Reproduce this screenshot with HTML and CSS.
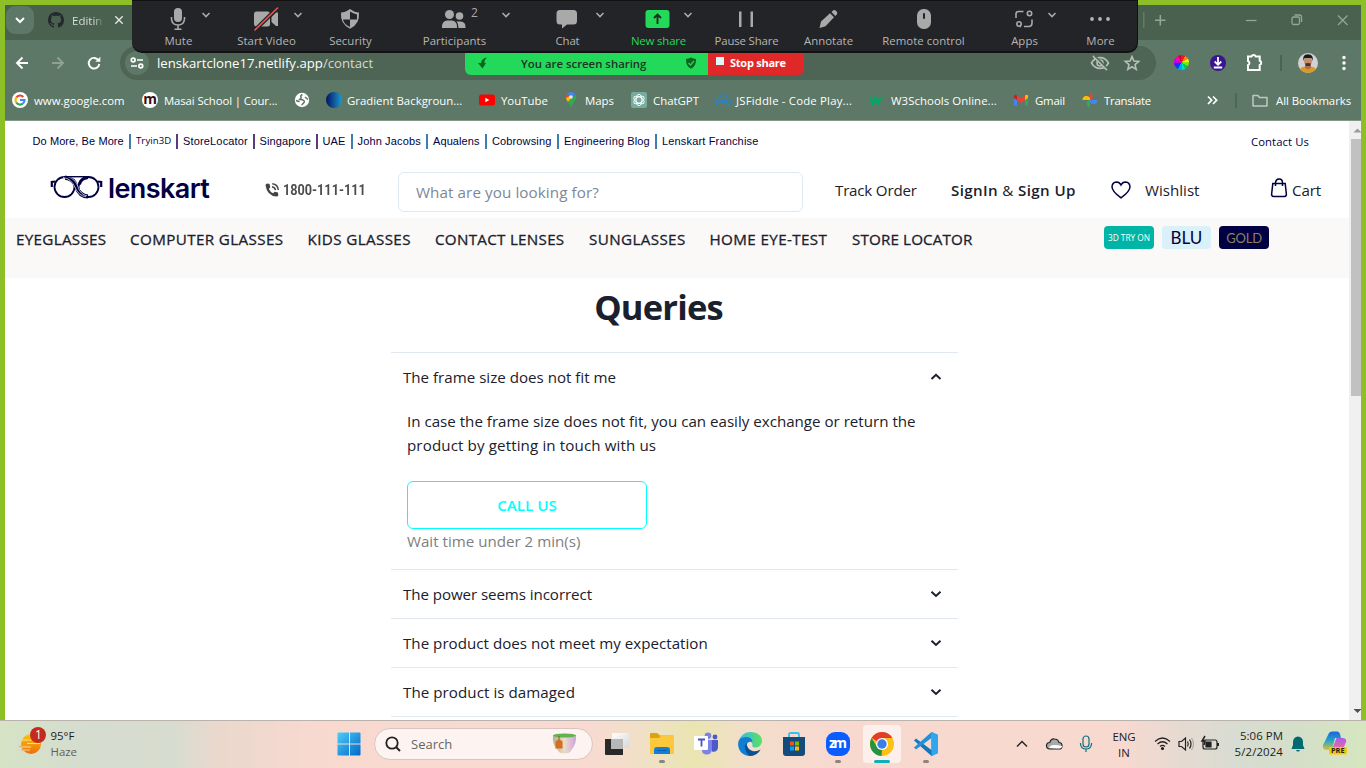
FILE: index.html
```html
<!DOCTYPE html>
<html lang="en">
<head>
<meta charset="utf-8">
<title>Lenskart - Contact</title>
<link rel="stylesheet" href="styles.css">
</head>
<body>
<div class="desktop">
  <div class="browser">
    <div class="tabstrip">
      <div class="tab-search"><svg width="12" height="12" viewBox="0 0 12 12"><path d="M2 4l4 4 4-4" fill="none" stroke="#fff" stroke-width="2"/></svg></div>
      <svg class="tab-icon" width="16" height="16" viewBox="0 0 16 16"><path fill="#24292e" d="M8 0C3.58 0 0 3.58 0 8c0 3.54 2.29 6.53 5.47 7.59.4.07.55-.17.55-.38 0-.19-.01-.82-.01-1.49-2.01.37-2.53-.49-2.69-.94-.09-.23-.48-.94-.82-1.13-.28-.15-.68-.52-.01-.53.63-.01 1.08.58 1.23.82.72 1.21 1.87.87 2.33.66.07-.52.28-.87.51-1.07-1.78-.2-3.64-.89-3.64-3.95 0-.87.31-1.59.82-2.15-.08-.2-.36-1.02.08-2.12 0 0 .67-.21 2.2.82.64-.18 1.32-.27 2-.27s1.36.09 2 .27c1.53-1.04 2.2-.82 2.2-.82.44 1.1.16 1.92.08 2.12.51.56.82 1.27.82 2.15 0 3.07-1.87 3.75-3.65 3.95.29.25.54.73.54 1.48 0 1.07-.01 1.93-.01 2.2 0 .21.15.46.55.38A8.01 8.01 0 0 0 16 8c0-4.42-3.58-8-8-8z"/></svg>
      <span class="tab-title">Editin</span>
      <svg width="10" height="10" viewBox="0 0 10 10"><path d="M1.3 1.3l7.4 7.4M8.7 1.3L1.3 8.7" stroke="#dfe5e0" stroke-width="1.4"/></svg>
      <div class="window-buttons">
        <svg width="219" height="20" viewBox="0 0 219 20" fill="none" stroke="#96a598" stroke-width="1.3">
          <path d="M1.8 2v16" stroke="#6b7f6e"/><path d="M13 10.300h10.500M18.300 5v10.500" stroke-width="1.500"/>
          <path d="M104 10.500h10.500"/><rect x="150" y="7" width="7.500" height="7.500" rx="1.500"/><path d="M152.500 5h5q2 0 2 2v5"/>
          <path d="M196 5.500l9.500 9.500M205.500 5.500L196 15"/>
        </svg>
      </div>
    </div>
    <div class="toolbar">
      <svg class="nav-icons" width="100" height="24" viewBox="0 0 100 24" fill="none" stroke="#fff" stroke-width="1.900">
        <path d="M23 12H12.500M17.500 6.500L12 12l5.500 5.500"/>
        <path d="M47 12h10.500M52.500 6.500L58 12l-5.500 5.500" stroke="#90a193"/>
        <path d="M93.600 9.500A5.300 5.300 0 1 0 94.300 13"/><path d="M95.300 5.800v5h-5z" fill="#fff" stroke="none"/>
      </svg>
      <div class="omnibox">
        <div class="site-info"><svg width="14" height="12" viewBox="0 0 14 12" fill="none" stroke="#fff" stroke-width="1.700"><circle cx="3.200" cy="3" r="1.900"/><path d="M7 3h6M1 9h6"/><circle cx="10.800" cy="9" r="1.900"/></svg></div>
        <span class="url">lenskartclone17.netlify.app<i>/contact</i></span>
        <svg class="omni-icons" width="50" height="20" viewBox="0 0 50 20" fill="none" stroke="#b5c0b6" stroke-width="1.600">
          <path d="M1.500 10Q4.500 4.600 10 4.600T18.500 10Q15.500 15.400 10 15.400T1.500 10z"/><circle cx="10" cy="10" r="3"/><path d="M3 3l14 14" stroke-width="1.800"/><path d="M4.500 2.500l13 13" stroke="#4e6454" stroke-width="1.400"/>
          <path d="M42 3.600l1.900 4.500 4.800.4-3.700 3.100 1.200 4.800-4.200-2.600-4.200 2.600 1.200-4.800-3.700-3.100 4.800-.4z"/>
        </svg>
      </div>
      <div class="wheel"></div>
      <svg class="ext" width="155" height="24" viewBox="0 0 155 24">
        <circle cx="18" cy="12" r="8" fill="#3a1591"/><path d="M18 6v7M14.700 10.500l3.300 3.300 3.300-3.300M13.800 16.500h8.400" stroke="#fff" stroke-width="1.800" fill="none"/>
        <path d="M48 5.500h3.500a2.200 2.200 0 0 1 4.200 0h4v4.200a2.200 2.200 0 0 1 0 4.200v5H48v-4.800a2.100 2.100 0 0 0 0-4z" fill="none" stroke="#fff" stroke-width="2"/>
        <path d="M81 4v16" stroke="#465e4c" stroke-width="1.500"/>
        <clipPath id="av"><circle cx="108" cy="12" r="10"/></clipPath>
        <g clip-path="url(#av)"><path fill="#d4d1d4" d="M98 2h20v20H98z"/><path d="M99 22q0-6 6-6.500h6q6 .5 6 6.500z" fill="#dc9a25"/><path d="M105 12h6v5l-3 1.500-3-1.500z" fill="#a9704e"/><ellipse cx="108" cy="10" rx="4" ry="5" fill="#c48f71"/><path d="M103.500 10Q102 3 108 3.200T112.500 10l-1-3h-7z" fill="#191b22"/><path d="M105 12.500q3-1 6 0l-1 2.500h-4z" fill="#453233"/></g>
        <g fill="#fff"><circle cx="144" cy="6.500" r="1.700"/><circle cx="144" cy="12" r="1.700"/><circle cx="144" cy="17.500" r="1.700"/></g>
      </svg>
    </div>
    <div class="bookmarks">
      <div class="bm w130"><svg viewBox="0 0 16 16"><circle cx="8" cy="8" r="8" fill="#fff"/><g fill="none" stroke-width="2.200"><path d="M4.300 5.500A4.500 4.500 0 0 1 11.300 4.900" stroke="#ea4335"/><path d="M4.300 5.500a4.500 4.500 0 0 0 0 5" stroke="#fbbc05"/><path d="M4.300 10.500a4.500 4.500 0 0 0 6.700 1" stroke="#34a853"/><path d="M8 8h4.500q0 2.200-1.500 3.500" stroke="#4285f4"/></g></svg><span>www.google.com</span></div>
      <div class="bm w152 tight1"><b class="masai">m</b><span>Masai School | Cour...</span></div>
      <div class="bm w32"><svg viewBox="0 0 16 16"><circle cx="8" cy="8" r="7.200" fill="#fff"/><path d="M8.500 2.500Q6 3.500 7 5T4.800 7.600Q8 7 9.800 8.500T7.500 13M2 8.500l3.500 1.300M11 5l3 2.500" fill="none" stroke="#5c7665" stroke-width="1.500"/></svg></div>
      <div class="bm w153 long"><b class="grad"></b><span>Gradient Backgroun...</span></div>
      <div class="bm w84"><svg viewBox="0 0 16 16"><rect y="2.500" width="16" height="11" rx="2.500" fill="#f00"/><path d="M6.300 5.700v4.600l4-2.300z" fill="#fff"/></svg><span>YouTube</span></div>
      <div class="bm w68"><svg viewBox="0 0 16 16"><path d="M8 0a5 5 0 0 0-4 2l4 4 4.200-3.600A5 5 0 0 0 8 0z" fill="#4285f4"/><path d="M4 2Q2.600 4 3 6l2 .7L7 4z" fill="#ea4335"/><path d="M3 6q.3 2 2 4l4.500-5L7 4z" fill="#fbbc04"/><path d="M5 10q2 2.500 3 6 1-3.500 3-6 2.500-3 2-5.500L12.200 2.400z" fill="#34a853"/><circle cx="8" cy="5" r="1.800" fill="#d9e7fb"/></svg><span>Maps</span></div>
      <div class="bm w84"><svg viewBox="0 0 16 16"><rect width="16" height="16" rx="2" fill="#75ac9d"/><g fill="none" stroke="#fff" stroke-width="1"><ellipse cx="8" cy="8" rx="3" ry="5.700"/><ellipse cx="8" cy="8" rx="3" ry="5.700" transform="rotate(60 8 8)"/><ellipse cx="8" cy="8" rx="3" ry="5.700" transform="rotate(120 8 8)"/></g></svg><span>ChatGPT</span></div>
      <div class="bm w154 long jsf"><svg viewBox="0 0 16 16"><path d="M3.500 13.500Q.5 13 .7 10.200.9 8.200 2.700 7.700 2.500 5 5 5 6.500 2.500 9.300 2.800 12.600 3.500 13 7q2.300.8 2.300 3.200 0 2.800-3 3.300zM8 9.500Q6.500 7.600 5.200 7.800T4 9.600t1.300 1.800T8 9.500q1.500-1.900 2.800-1.700T12 9.600t-1.300 1.800T8 9.500z" fill="none" stroke="#2485d6" stroke-width="1.200"/></svg><span>JSFiddle - Code Play...</span></div>
      <div class="bm w144 long w3"><svg viewBox="0 0 16 16"><path d="M1 5l2.500 6.500L6.500 6 9 11.500 12 5" fill="none" stroke="#06a566" stroke-width="2.800"/><path d="M13.500 4h1.500l-1 1.600 1 1.600" fill="none" stroke="#06a566" stroke-width=".8"/></svg><span>W3Schools Online...</span></div>
      <div class="bm w69 gm"><svg viewBox="0 0 16 16"><path d="M1 3h3v10.500H2q-1 0-1-1z" fill="#4285f4"/><path d="M12 3h3v9.500q0 1-1 1h-2z" fill="#34a853"/><path d="M1 3.500Q2 2 4 3.500l4 3 4-3Q14 2 15 3.500v2.600l-7 5-7-5z" fill="#ea4335"/><path d="M12 3.500Q14 2 15 3.500v2.600l-3 2z" fill="#fbbc04"/><path d="M1 3.500Q2 2 4 3.500v4.600l-3-2z" fill="#c5221f"/></svg><span>Gmail</span></div>
      <div class="bm w125 tr"><svg viewBox="0 0 16 16"><path d="M8 8V.5a4 4 0 0 1 0 7.500z" fill="#ea4335"/><path d="M8 8H.5A4 4 0 0 1 8 6z" fill="#fbbc04"/><path d="M8 8v7.500A4 4 0 0 1 6 8.300z" fill="#34a853"/><path d="M8 8h7.500a4 4 0 0 1-7.500 2z" fill="#4285f4"/></svg><span>Translate</span></div>
      <svg class="bm-end" width="62" height="20" viewBox="0 0 62 20" fill="none"><path d="M1 6.500l3.700 3.700L1 14M6 6.500l3.700 3.700L6 14" stroke="#fff" stroke-width="1.700"/><path d="M29 3v15" stroke="#4a6150" stroke-width="1.500"/><path d="M46 5.500h5l1.500 2h7.500v8.500H46z" stroke="#bfc8c0" stroke-width="1.500" stroke-linejoin="round"/></svg>
      <span class="all">All Bookmarks</span>
    </div>
    <div class="viewport">
      <main class="page">
        <div class="topline">
          <a class="l1">Do More, Be More</a><a class="l2">Tryin3D</a><a class="l3">StoreLocator</a><a class="l4">Singapore</a><a class="l5">UAE</a><a class="l6">John Jacobs</a><a class="l7">Aqualens</a><a class="l8">Cobrowsing</a><a class="l9">Engineering Blog</a><a class="l10">Lenskart Franchise</a>
          <a class="contact">Contact Us</a>
        </div>
        <header class="header">
          <svg class="glasses" width="53" height="24" viewBox="0 0 53 24" fill="none" stroke="#000042"><ellipse cx="14.500" cy="12" rx="10" ry="10" stroke-width="1.800"/><ellipse cx="38.500" cy="12" rx="10" ry="10" stroke-width="1.800"/><path d="M15 2.600q8.500.5 11.500 9.400t11.500 9.500" stroke-width="4.200"/><path d="M13 2.300q8.500 1.500 12 10t11 9.500M18 1.800q7.500 2 10 10t9 9" stroke="#fff" stroke-width=".7"/><path d="M29.500 9.500q1-6 8.500-7" stroke-width="3"/><path d="M14 1.700h24" stroke-width="1.400"/><path d="M5.500 6.500L1.800 7v5M47.500 6.500l3.700.5v5" stroke-width="2.200"/></svg>
          <span class="brand">lenskart</span>
          <svg class="phone" width="16" height="16" viewBox="0 0 16 16"><path d="M3.300 1.500L5.500 2l.8 3.300L4.800 7q1.500 3 4.300 4.300l1.600-1.500 3.300.8.300 3q-.5 1-1.800.9Q3 14 1.500 3.300q.3-1.500 1.800-1.800z" fill="#444"/><path d="M8 4.700q3 .3 3.500 3.500M8.300 1.700q5.500.5 6 6.300" fill="none" stroke="#444" stroke-width="1.500"/></svg>
          <b class="tel">1800-111-111</b>
          <div class="search">What are you looking for?</div>
          <span class="track">Track Order</span>
          <span class="sign"><b>SignIn</b> &amp; <b>Sign Up</b></span>
          <svg class="heart" width="20" height="18" viewBox="0 0 20 18"><path d="M10 16.800Q1 10.500 1 5.800 1.300 1.300 5.500 1 8.500 1 10 4q1.500-3 4.500-3 4.200.3 4.500 4.800 0 4.700-9 11z" fill="none" stroke="#000042" stroke-width="1.500"/></svg>
          <span class="wish">Wishlist</span>
          <svg class="bag" width="18" height="20" viewBox="0 0 18 20" fill="none" stroke="#000042" stroke-width="1.500"><path d="M2.800 5.500h12.400l1.200 10.800q.1 2-1.900 2.200H3.500q-2-.2-1.900-2.200zM5.500 8V4.500Q5.800 1.200 9 1t3.500 3.500V8"/></svg>
          <span class="cart">Cart</span>
        </header>
        <nav class="nav">
          <a class="n1">EYEGLASSES</a><a class="n2">COMPUTER GLASSES</a><a class="n3">KIDS GLASSES</a><a class="n4">CONTACT LENSES</a><a class="n5">SUNGLASSES</a><a class="n6">HOME EYE-TEST</a><a class="n7">STORE LOCATOR</a>
          <div class="pill try">3D TRY ON</div><div class="pill blu">BLU</div><div class="pill gold">GOLD</div>
        </nav>
        <h1>Queries</h1>
        <section class="accordion">
          <div class="row"><span>The frame size does not fit me</span><svg width="12" height="8" viewBox="0 0 12 8"><path d="M1.500 6L6 1.800 10.500 6" /></svg></div>
          <div class="panel">
            <p>In case the frame size does not fit, you can easily exchange or return the<br><span class="line2">product by getting in touch with us</span></p>
            <button>CALL US</button>
            <p class="wait">Wait time under 2 min(s)</p>
          </div>
          <div class="row"><span class="pw">The power seems incorrect</span><svg width="12" height="8" viewBox="0 0 12 8"><path d="M1.500 1.800L6 6l4.500-4.200"/></svg></div>
          <div class="row"><span class="ex">The product does not meet my expectation</span><svg width="12" height="8" viewBox="0 0 12 8"><path d="M1.500 1.800L6 6l4.500-4.200"/></svg></div>
          <div class="row"><span class="dm">The product is damaged</span><svg width="12" height="8" viewBox="0 0 12 8"><path d="M1.500 1.800L6 6l4.500-4.200"/></svg></div>
          <div class="row"></div>
        </section>
      </main>
      <div class="scrollbar"><svg width="12" height="17" viewBox="0 0 12 17"><path d="M4.500 11.500L8.500 7.500l4 4z" fill="#9a9a9a"/></svg><div class="thumb"></div><svg width="12" height="17" viewBox="0 0 12 17"><path d="M4.500 6L8.500 10l4-4z" fill="#505050"/></svg></div>
    </div>
  </div>

  <div class="zoom">
    <div class="z z92"><svg viewBox="-46 0 92 32" width="92" height="32"><rect x="-4" y="8" width="8" height="14" rx="4" fill="#a9a9a9"/><path d="M-6.500 17v2q.5 6 6.500 6t6.500-6v-2M0 25v4M-3.500 29.300h7" class="s"/><path class="c" d="M24.500 13l3.500 3.500L31.500 13"/></svg><span>Mute</span></div>
    <div class="z z84"><svg viewBox="-42 0 84 32" width="84" height="32"><rect x="-12" y="11.500" width="16" height="15" rx="2.500" fill="#a9a9a9"/><path d="M5.500 17l4.500-4.500h2v13.500h-2l-4.500-4z" fill="#a9a9a9"/><path d="M-11.500 30.500L12 7.500" stroke="#232427" stroke-width="4"/><path d="M-11.500 30.500L12 7.500" stroke="#e8504c" stroke-width="1.700"/><path class="c" d="M28.500 13l3.500 3.500 3.500-3.500"/></svg><span>Start Video</span></div>
    <div class="z z84"><svg viewBox="-42 0 84 32" width="84" height="32"><path d="M0 9q5 3.500 9 3.500 1 11.500-9 16.300Q-10 24-9 12.500-5 12.500 0 9z" fill="#a9a9a9"/><path d="M-7 19.500h7v7.500Q-6 24.500-7 19.500zM0 19.500V11.500q3 2.200 7 3l-.1 5z" fill="#232427"/></svg><span>Security</span></div>
    <div class="z z124"><svg viewBox="-62 0 124 32" width="124" height="32" fill="#a9a9a9"><circle cx="-4.500" cy="14.500" r="4.500"/><path d="M-12 28q-.5-7 5-7.500h5q5.500.5 5 7.500z"/><circle cx="5.500" cy="16" r="3.800"/><path d="M4.500 28q0-4.500-2-6.500h4q5.500 0 5 6.500z"/><text x="17" y="17" font-size="12">2</text><path class="c" d="M48.500 13l3.500 3.500 3.500-3.500"/></svg><span>Participants</span></div>
    <div class="z z102 tight"><svg viewBox="-51 0 102 32" width="102" height="32"><path d="M-7 10H6.500q3.500 0 3.500 3.500V21q0 3.500-3.500 3.500H0l-5 4v-4h-2q-3.500 0-3.500-3.500v-7.500Q-10.500 10-7 10z" fill="#a9a9a9"/><path class="c" d="M29.500 13l3.500 3.500 3.500-3.500"/></svg><span>Chat</span></div>
    <div class="z z80 tight green"><svg viewBox="-40 0 80 32" width="80" height="32"><rect x="-12.500" y="10" width="24" height="18" rx="3" fill="#23d959"/><path d="M-.5 24v-9M-4 18l3.500-3.500L3 18" fill="none" stroke="#1c3022" stroke-width="1.900"/><path class="c" d="M26.500 13l3.500 3.500 3.500-3.500"/></svg><span>New share</span></div>
    <div class="z z96 tight"><svg viewBox="-48 0 96 32" width="96" height="32"><path d="M-7 11.500h2.500v15.500H-7zM4.500 11.500H7v15.500H4.500z" fill="#a9a9a9"/></svg><span>Pause Share</span></div>
    <div class="z z68"><svg viewBox="-34 0 68 32" width="68" height="32"><path d="M-8.500 28l1.500-6.500L2 13.200 6 17.200-2.500 26.300zM3.500 12L5 10.600q1.500-1.200 3 .2l.6.600q1.500 1.500.2 3L7.300 16z" fill="#a9a9a9"/></svg><span>Annotate</span></div>
    <div class="z z122"><svg viewBox="-61 0 122 32" width="122" height="32"><rect x="-6" y="9" width="14" height="20" rx="6.500" fill="#a9a9a9"/><rect x="0" y="13" width="2" height="6" rx="1" fill="#232427"/></svg><span>Remote control</span></div>
    <div class="z z80"><svg viewBox="-40 0 80 32" width="80" height="32"><path class="s" d="M-8 18v-4q0-2.500 2.500-2.500h5M8 19.500v3.500q0 3.500-3.500 3.500H0M-4.500 26.500H-3"/><circle class="s" cx="5.500" cy="13.500" r="2.200"/><circle class="s" cx="-5" cy="24" r="2.200"/><path class="c" d="M24.500 13l3.500 3.500 3.500-3.500"/></svg><span>Apps</span></div>
    <div class="z z72"><svg viewBox="-36 0 72 32" width="72" height="32" fill="#b5b5b5"><circle cx="-8" cy="19" r="1.900"/><circle cy="19" r="1.900"/><circle cx="8" cy="19" r="1.900"/></svg><span>More</span></div>
  </div>
  <div class="sharing">
    <div class="share-state"><svg width="12" height="12" viewBox="0 0 12 12"><path d="M10.500.5Q4.500 1 4 6H1l4.500 5.500L9 6H7.500Q7 2.500 10.500.5z" fill="#0c6420"/></svg><span>You are screen sharing</span><svg width="12" height="12" viewBox="0 0 12 12"><path d="M6 .5q2.500 1.300 5 1.500.6 7-5 9.700Q.4 9 1 2 3.500 1.800 6 .5z" fill="#0c6420"/><path d="M3.500 6l2 2 3.500-4" fill="none" stroke="#23d959" stroke-width="1.200"/></svg></div>
    <div class="stop"><i></i>Stop share</div>
  </div>

  <footer class="taskbar">
    <svg class="haze" width="30" height="32" viewBox="0 0 30 32"><defs><linearGradient id="sun" x2="0" y2="1"><stop stop-color="#fdc60a"/><stop offset="1" stop-color="#ec6d0b"/></linearGradient></defs><circle cx="13" cy="19" r="10" fill="url(#sun)"/><path d="M4 15h9M9 18.500h13M3 22h10" stroke="#ffdf8f" stroke-width="1.200"/><path d="M1 21.500h9M3 25h9" stroke="#eab574" stroke-width="1.600"/><circle cx="20" cy="10" r="8" fill="#c42b1c"/><text x="17" y="14" font-size="12" fill="#fff">1</text></svg>
    <div class="weather"><span>95°F</span><span class="gray">Haze</span></div>
    <svg class="win" width="24" height="24" viewBox="0 0 24 24"><defs><linearGradient id="wg" x2="1" y2="1"><stop stop-color="#4ccdf9"/><stop offset="1" stop-color="#0067c8"/></linearGradient></defs><path fill="url(#wg)" d="M1.500.500H12v11H.5v-10q0-1 1-1zM13 .5h9.500q1 0 1 1v10H13zM.500 12.500H12v11H1.500q-1 0-1-1zM13 12.500h10.500v10q0 1-1 1H13z"/></svg>
    <div class="tsearch"><svg width="16" height="16" viewBox="0 0 16 16"><circle cx="7" cy="7" r="5.700" fill="none" stroke="#222" stroke-width="1.800"/><path d="M11 11l4 4" stroke="#222" stroke-width="2"/></svg><span>Search</span>
      <svg width="26" height="22" viewBox="0 0 26 22"><defs><linearGradient id="cup"><stop stop-color="#b9ae90"/><stop offset=".5" stop-color="#ecdccb"/><stop offset="1" stop-color="#cda3dd"/></linearGradient></defs><path d="M1 2h23q1 9-5 15.500-1 3-6.500 3T6 17.500Q0 12 1 2z" fill="url(#cup)"/><ellipse cx="12.500" cy="2.500" rx="11.500" ry="2" fill="#60b34e"/><path d="M7 3v4" stroke="#83583e"/><path d="M3.500 8.500L7 6l3.500 2.500v7h-7z" fill="#d4701d"/></svg></div>
    <div class="apps">
      <div class="app a48"><svg viewBox="0 0 24 24"><defs><linearGradient id="tv" x2="1" y2="1"><stop stop-color="#fff"/><stop offset="1" stop-color="#d8d8d8"/></linearGradient></defs><path fill="#292929" d="M0 7h18v16H1q-1 0-1-1z"/><path fill="url(#tv)" d="M7 1h16q1 0 1 1v14H7z"/><path fill="#b7b7b7" d="M6 7h12v10H6z"/></svg></div>
      <div class="app"><svg viewBox="0 0 24 24"><path d="M0 2q0-1 1-1h6l3 2.500h13q1 0 1 1V22H0z" fill="#dba312"/><path d="M0 6h9l2-2.500h12q1 0 1 1V22H0z" fill="#fdc83b"/><path d="M4 22v-4q0-3 3-3h10q3 0 3 3v4z" fill="#1380d8"/><path d="M7 18.500h10" stroke="#0a5eab"/></svg><i class="dot"></i></div>
      <div class="app"><svg viewBox="0 0 24 24"><circle cx="14" cy="3.700" r="3.300" fill="#7b83eb"/><circle cx="21" cy="5" r="2.400" fill="#5059c9"/><path d="M9 8h9v10q-1 5-6 4.500-4-.5-4-4z" fill="#7b83eb"/><path d="M18 8h6v8q-1 4.500-6 3.500z" fill="#5059c9"/><rect y="4" width="14" height="14" rx="1" fill="#fff"/><path d="M4 7.500h7M7.500 7.500v7" stroke="#4b53bc" stroke-width="1.800"/></svg></div>
      <div class="app a43"><svg viewBox="0 0 24 24"><defs><linearGradient id="ed"><stop stop-color="#36b9ed"/><stop offset="1" stop-color="#5be060"/></linearGradient></defs><path d="M.5 10A12 12 0 0 1 12 0q12 .5 12 9.500-1 6-7 6-3.500 0-2.500-3Q12 6 5 8 1.500 9 .5 10z" fill="url(#ed)"/><path d="M0 12Q.5 5 8 5q6 0 6.500 5Q9 9 8.500 14q.5 5.500 7 6.500 4 .3 7-3Q19 24 12 24 1 23.500 0 12z" fill="#117ed2"/><path d="M8.500 10.500Q4 17 11.500 24 19 24 22.500 17.500q-3.500 2.500-8 1.500-6-2-6-8.500z" fill="#0c4f95"/></svg></div>
      <div class="app a45"><svg viewBox="0 0 24 24"><path d="M7 6V2.500Q7 1 8.500 1h7Q17 1 17 2.500V6" fill="none" stroke="#38bdf1" stroke-width="1.800"/><path d="M1 5h22v16q0 3-3 3H4q-3 0-3-3z" fill="#154b7c"/><path d="M8 9.500h4v4H8z" fill="#f25022"/><path d="M13 9.500h4v4h-4z" fill="#7fba00"/><path d="M8 14.500h4v4H8z" fill="#00a4ef"/><path d="M13 14.500h4v4h-4z" fill="#ffb900"/></svg></div>
      <div class="app"><svg viewBox="0 0 24 24"><rect width="24" height="24" rx="9" fill="#0b5cff"/><text x="3" y="16" font-size="14" font-weight="700" textLength="18" fill="#fff">zm</text></svg><i class="dot"></i></div>
      <div class="app"><div class="active"></div><svg viewBox="0 0 24 24"><circle cx="12" cy="12" r="12" fill="#fbc116"/><path d="M12 12L1.600 6A12 12 0 0 1 22.400 6H12z" fill="#e33b2e"/><path d="M12 12v6L11.500 24A12 12 0 0 1 1.600 6L7 15z" fill="#229342"/><circle cx="12" cy="12" r="6" fill="#fff"/><circle cx="12" cy="12" r="4.700" fill="#3b7de9"/></svg><i class="dot on"></i></div>
      <div class="app"><svg viewBox="0 0 24 24"><path d="M17.500 0L24 3v18l-6.500 3L0 8.500 2 6.500 17.500 18z" fill="#1377b9"/><path d="M0 15.500L2 17.500 17.500 6V0z" fill="#2291d8"/><path d="M17.500 0L24 3v18l-6.500 3z" fill="#2fa7ee"/></svg><i class="dot"></i></div>
    </div>
    <svg class="tray" width="90" height="24" viewBox="0 0 90 24" fill="none"><path d="M5 14.500l5-5 5 5" stroke="#222" stroke-width="1.400"/><path d="M38 17q-3.500-.3-3.500-3.300t3.300-3.200Q39 6.500 42.500 7q3.500 0 4.500 3.500 3 0 3 3.300T47 17z" fill="#a9a9a9" stroke="#222" stroke-width="1.200"/><path d="M37 16q1-3 5-3t8 1q0 2.500-3 2.500z" fill="#fff"/><rect x="71" y="4" width="6" height="11" rx="3" stroke="#0d7180" stroke-width="1.200"/><path d="M68.500 11v1q.5 5 5.500 5t5.500-5v-1M74 17v3" stroke="#0d7180" stroke-width="1.200"/></svg>
    <div class="lang"><span>ENG</span><span>IN</span></div>
    <svg class="sys" width="70" height="22" viewBox="0 0 70 22" fill="none" stroke="#222" stroke-width="1.200"><path d="M1 8.500q7.500-7 15 0M3.500 11q5-4.500 10 0M6 13.500q2.500-2.200 5 0"/><circle cx="8.500" cy="15.500" r="1" fill="#222"/><path d="M25 8.500h2.500l4-3.500v12l-4-3.500H25zM33.500 8.500q1.500 2.500 0 5M35.500 6.500q3 4.500 0 9"/><path d="M37.500 5q4 6 0 12" stroke="#aaa"/><rect x="49" y="7" width="14" height="9" rx="2"/><path d="M64 10v3" stroke-width="2"/><path d="M52 9h5v5h-5z" fill="#222"/><path d="M51 3l-3 5h3l-1 4" stroke-width="1.500"/></svg>
    <div class="clock"><span>5:06 PM</span><span class="date">5/2/2024</span></div>
    <svg class="bell" width="14" height="16" viewBox="0 0 14 16"><path d="M7 .5q4.500.5 5 5V9l1.500 4H.5L2 9V5.500Q2.500 1 7 .5zM5 14h4q-.500 1.500-2 1.500T5 14z" fill="#006a73"/></svg>
    <svg class="copilot" width="26" height="26" viewBox="0 0 26 26"><defs><linearGradient id="c1" x2="0" y2="1"><stop stop-color="#1d63dc"/><stop offset=".5" stop-color="#23a7c8"/><stop offset="1" stop-color="#e5c12b"/></linearGradient><linearGradient id="c2" x2="0" y2="1"><stop stop-color="#a95cf0"/><stop offset="1" stop-color="#f56d8a"/></linearGradient></defs><path d="M7 2q1-1.500 3-1.500h5.500Q18 1 18.500 5l.5 2h-6L10 19H5q-5 0-4-5z" fill="url(#c1)"/><path d="M14.500 7H21q4 .5 3 4l-2 5q-1 2.500-4 2.500h-8z" fill="url(#c2)"/><rect x="7" y="16" width="18" height="7.500" rx="2" fill="#fdc700"/><text x="9" y="22.300" font-size="7.300" font-weight="700" textLength="13.500" fill="#222">PRE</text></svg>
  </footer>
</div>
</body>
</html>
```
FILE: styles.css
```css
* { box-sizing: border-box; }
body { margin: 0; font-family: "Open Sans", "Noto Sans", sans-serif; }
svg { display: block; flex: none; }
.desktop { position: relative; width: 1366px; height: 768px; overflow: hidden; background: #8dbf26; display: flex; flex-direction: column; }
.browser { height: 720px; padding: 5px 5px 0; display: flex; flex-direction: column; flex: none; }

/* Tab strip */
.tabstrip { height: 35px; background: #4a614f; display: flex; align-items: center; padding: 0 0 5px 1px; flex: none; }
.tab-search { width: 28px; height: 28px; border-radius: 9px; background: #5d7866; display: flex; align-items: center; justify-content: center; margin-right: 14px; }
.tab-title { width: 36px; margin: 0 6px 0 8px; background: linear-gradient(90deg, #dfe5e0 60%, #4a614f 90%); -webkit-background-clip: text; background-clip: text; color: transparent; font-size: 11.500px; }
.window-buttons { margin-left: auto; }

/* Toolbar */
.toolbar { height: 45px; background: #5d7866; display: flex; align-items: center; flex: none; }
.nav-icons { margin-right: 15px; }
.omnibox { width: 1036px; height: 34px; border-radius: 17px; background: #4e6454; display: flex; align-items: center; flex: none; padding: 0 16px 0 5px; }
.site-info { width: 24px; height: 24px; border-radius: 12px; background: #5d7866; display: flex; align-items: center; justify-content: center; margin-right: 8px; }
.url { color: #fff; font-size: 13.200px; white-space: nowrap; }
.url i { font-style: normal; color: #d3dad3; }
.omni-icons { margin-left: auto; }
.wheel { width: 15px; height: 15px; margin-left: 18px; border-radius: 50%; flex: none; background: conic-gradient(#ef1a1a 0 30deg, #ff8c00 0 60deg, #f4f400 0 90deg, #7ce800 0 120deg, #08c846 0 150deg, #00e0c0 0 180deg, #00a2ff 0 210deg, #003cff 0 240deg, #6a00ff 0 270deg, #c400e8 0 300deg, #ff00a8 0 330deg, #d0003a 0); }
.ext { margin-left: 11px; }

/* Bookmarks */
.bookmarks { height: 36px; background: #5d7866; border-bottom: 1px solid #82998a; display: flex; align-items: center; padding: 0 0 5px 7px; color: #fff; font-size: 11.400px; flex: none; white-space: nowrap; }
.bm { display: flex; align-items: center; gap: 6px; flex: none; }
.bm svg { width: 16px; height: 16px; }
.w130 { width: 130px; } .w152 { width: 152px; } .w32 { width: 32px; } .w153 { width: 153px; } .w84 { width: 84px; } .w68 { width: 68px; } .w154 { width: 154px; } .w144 { width: 144px; } .w69 { width: 69px; } .w125 { width: 125px; }
.tight1 { letter-spacing: -.13px; }
.long { gap: 5px; }
.jsf { letter-spacing: .18px; }
.w3 { letter-spacing: .06px; gap: 6px; }
.gm { letter-spacing: -.18px; }
.tr { letter-spacing: -.26px; }
.masai { width: 16px; height: 16px; border-radius: 8px; background: #fff; color: #3a1010; font-size: 14px; line-height: 13px; text-align: center; letter-spacing: 0; }
.grad { width: 16px; height: 16px; border-radius: 8px; background: linear-gradient(90deg, #061161, #1b9bd1); }
.all { margin-left: 7px; letter-spacing: -.07px; }

/* Web page */
.viewport { flex: 1; display: flex; min-height: 0; }
.page { width: 1344px; background: #fff; overflow: hidden; color: #1a202c; font-size: 15.130px; }
.scrollbar { width: 12px; background: #f0f0f0; display: flex; flex-direction: column; }
.thumb { height: 257px; margin: 1px 0 auto 2px; background: #c1c1c1; }
.topline { height: 40px; padding-left: 27px; display: flex; align-items: center; font: 11px "Liberation Sans", Arial, sans-serif; letter-spacing: .09px; color: #000042; white-space: nowrap; }
.topline a { height: 15px; line-height: 15px; margin-right: 5px; border-right: 2px solid #3a7fae; flex: none; }
.topline .l1 { width: 99px; padding-left: .5px; } .topline .l2 { width: 42px; font: 9.600px/14px "Open Sans", sans-serif; } .topline .l3 { width: 71.500px; letter-spacing: .160px; } .topline .l4 { width: 58px; letter-spacing: .14px; } .topline .l5 { width: 30px; } .topline .l6 { width: 70.500px; letter-spacing: .14px; } .topline .l7 { width: 54px; } .topline .l8 { width: 67px; letter-spacing: .13px; } .topline .l9 { width: 93px; letter-spacing: .13px; } .topline .l10 { border: 0; letter-spacing: .16px; }
.topline .l2, .topline .l3, .topline .l4 { border-color: #5d3a7c; }
.topline .contact { border: 0; margin: 0 40px 0 auto; font: 11.300px/16px "Open Sans", sans-serif; }
.header { height: 57px; display: flex; align-items: center; white-space: nowrap; }
.glasses { margin: -5px 5px 0 45px; }
.brand { width: 156px; margin-top: -3px; font: 600 27px Inter, sans-serif; letter-spacing: -.6px; color: #000042; }
.phone { margin-right: 3px; margin-top: 1px; }
.tel { width: 115px; font: 700 15px Roboto, sans-serif; color: #4c4c4c; transform: scaleX(.845); transform-origin: 0 50%; margin-top: 1px; }
.search { width: 405px; height: 40px; border: 1px solid #e2e8f0; border-radius: 6px; padding: 0 17px; line-height: 38px; color: #7d8799; letter-spacing: .09px; margin: 0 32px 6px 0; align-self: flex-end; flex: none; font-size: 15.200px; }
.track { width: 116px; letter-spacing: -.2px; }
.sign { width: 160px; letter-spacing: .38px; padding-top: 1px; }
.sign b { font-weight: 600; }
.heart { margin: 1px 14px 0 0; }
.wish { width: 125px; }
.bag { margin: -4px 4px 0 0; }
.cart { letter-spacing: -.13px; }
.nav { height: 60px; background: #faf9f8; display: flex; padding: 8px 0 0 11px; font-size: 15.200px; font-weight: 500; line-height: 27px; white-space: nowrap; letter-spacing: .38px; }
.nav a { flex: none; -webkit-text-stroke: .3px #1a202c; }
.n1 { width: 114px; letter-spacing: .31px; } .n2 { width: 177.500px; } .n3 { width: 127.500px; } .n4 { width: 154px; letter-spacing: .28px; } .n5 { width: 120.500px; } .n6 { width: 142.500px; } .n7 { width: 252px; letter-spacing: .14px; }
.pill { width: 50px; height: 23px; border-radius: 4px; margin-right: 8px; text-align: center; line-height: 23px; letter-spacing: 0; font-weight: 400; flex: none; }
.try { background: #00b5a5; color: #fff; font-size: 8.300px; }
.blu { background: #dbf1f9; color: #000042; font: 17px/24px Lato, sans-serif; width: 49px; }
.gold { background: #000042; color: #8d8060; font: 13px/24px Lato, sans-serif; letter-spacing: -.2px; }
h1 { margin: 7px 0 0; padding-right: 37px; font-size: 34.500px; line-height: 43px; text-align: center; letter-spacing: -.8px; }
.accordion { width: 567px; margin: 24px 0 0 386px; }
.row { height: 49px; border-top: 1px solid #e2e8f0; display: flex; align-items: center; justify-content: space-between; padding: 0 16px 0 12px; }
.row path { fill: none; stroke: #1a202c; stroke-width: 2; }
.row span { margin-top: -1px; }
.pw { letter-spacing: -.08px; }
.ex { letter-spacing: .02px; }
.dm { letter-spacing: .06px; }
.panel { height: 168px; padding: 8px 16px 0; }
p { margin: 0; line-height: 24px; white-space: nowrap; }
.line2 { letter-spacing: .12px; }
button { display: block; width: 240px; height: 48px; margin-top: 24px; border: 1px solid #0ff; border-radius: 6px; background: #fff; color: #0ff; font: 600 15.200px "Open Sans", sans-serif; padding: 0; }
.wait { color: gray; }

/* Meeting controls float over the browser window */
.zoom { position: absolute; left: 132px; top: 0; width: 1006px; height: 53px; background: #232427; border: 1px solid #111; border-radius: 0 0 10px 10px; border-width: 1px 1px 2px 0; display: flex; overflow: hidden; color: #b5b5b5; font-size: 11.400px; }
.z { display: flex; flex-direction: column; align-items: center; flex: none; white-space: nowrap; letter-spacing: .04px; }
.z svg { margin-top: -1px; }
.z > span { line-height: 16px; margin-top: 1px; padding-left: 1px; }
.tight { letter-spacing: -.15px; }
.green > span { color: #23d959; }
.s { fill: none; stroke: #a9a9a9; stroke-width: 1.600; }
.c { fill: none; stroke: #a9a9a9; stroke-width: 1.600; }
.z92 { width: 92px; } .z84 { width: 84px; } .z124 { width: 124px; } .z102 { width: 102px; } .z80 { width: 80px; } .z96 { width: 96px; } .z68 { width: 68px; } .z122 { width: 122px; } .z72 { width: 72px; }
.sharing { position: absolute; left: 465px; top: 53px; width: 339px; height: 22px; display: flex; border-radius: 0 0 6px 6px; overflow: hidden; font-weight: 600; font-size: 11.400px; }
.share-state { width: 243px; background: #23d959; color: #1e3325; display: flex; align-items: center; padding: 0 11px 2px 12px; }
.share-state span { margin: 0 auto 0 32px; }
.stop { flex: 1; background: #e02828; color: #fff; display: flex; font-weight: 700; font-size: 11px; letter-spacing: -.25px; line-height: 20px; }
.stop i { width: 8px; height: 8px; background: #e2f7fb; margin: 4px 6px 0 8px; }

/* Taskbar */
.taskbar { height: 48px; padding-bottom: 2px; border-top: 1px solid #b9b2ad; flex: none; display: flex; align-items: center; color: #1c1c1c; font-size: 11.400px; background: linear-gradient(90deg, #d6e3c4 0, #d5ddcf 80px, #d8dcd0 175px, #ead8cd 215px, #f7d9d0 310px, #f8dad1 590px, #efe1c4 650px, #eae5b0 695px, #f1dfc8 740px, #f8d9d0 820px, #f8d9d0 1120px, #e6dad0 1180px, #d8dcd2 1235px, #d4dfc9 1300px, #d6e6be 1366px); }
.haze { margin: -5px 0 0 18px; }
.weather, .lang, .clock { display: flex; flex-direction: column; line-height: 16px; white-space: nowrap; }
.weather { width: 286.500px; margin-left: 2.500px; margin-top: 1px; }
.gray { color: #5f5f5c; }
.win { margin-right: 13px; }
.tsearch { width: 219px; height: 32px; border: 1px solid #d9c5bf; border-radius: 16px; background: #fdf3f0; display: flex; align-items: center; padding: 0 14px 0 10px; font-size: 13px; color: #666; flex: none; }
.tsearch span { margin: 0 auto 0 10px; }
.apps { display: flex; margin-left: 1px; }
.app { width: 44px; height: 46px; display: flex; align-items: center; justify-content: center; position: relative; flex: none; }
.a48 { width: 46px; } .a43 { width: 43px; } .a45 { width: 45px; }
.app svg { width: 24px; height: 24px; position: relative; }
.active { position: absolute; left: 3px; top: 4px; width: 38px; height: 38px; border-radius: 4px; background: #fdf0ec; }
.dot { position: absolute; left: 19px; bottom: 4px; width: 6px; height: 3px; border-radius: 2px; background: #8c8280; }
.dot.on { left: 14px; width: 16px; background: #0dafb8; }
.tray { margin-left: 64px; }
.lang { width: 30px; text-align: center; margin: 2px 0 0 7px; }
.sys { margin-left: 14.500px; }
.clock { width: 70px; text-align: right; letter-spacing: .06px; margin-left: -10.500px; }
.date { letter-spacing: .12px; }
.bell { margin: 1px 0 0 8px; }
.copilot { margin-left: 17px; }
```
